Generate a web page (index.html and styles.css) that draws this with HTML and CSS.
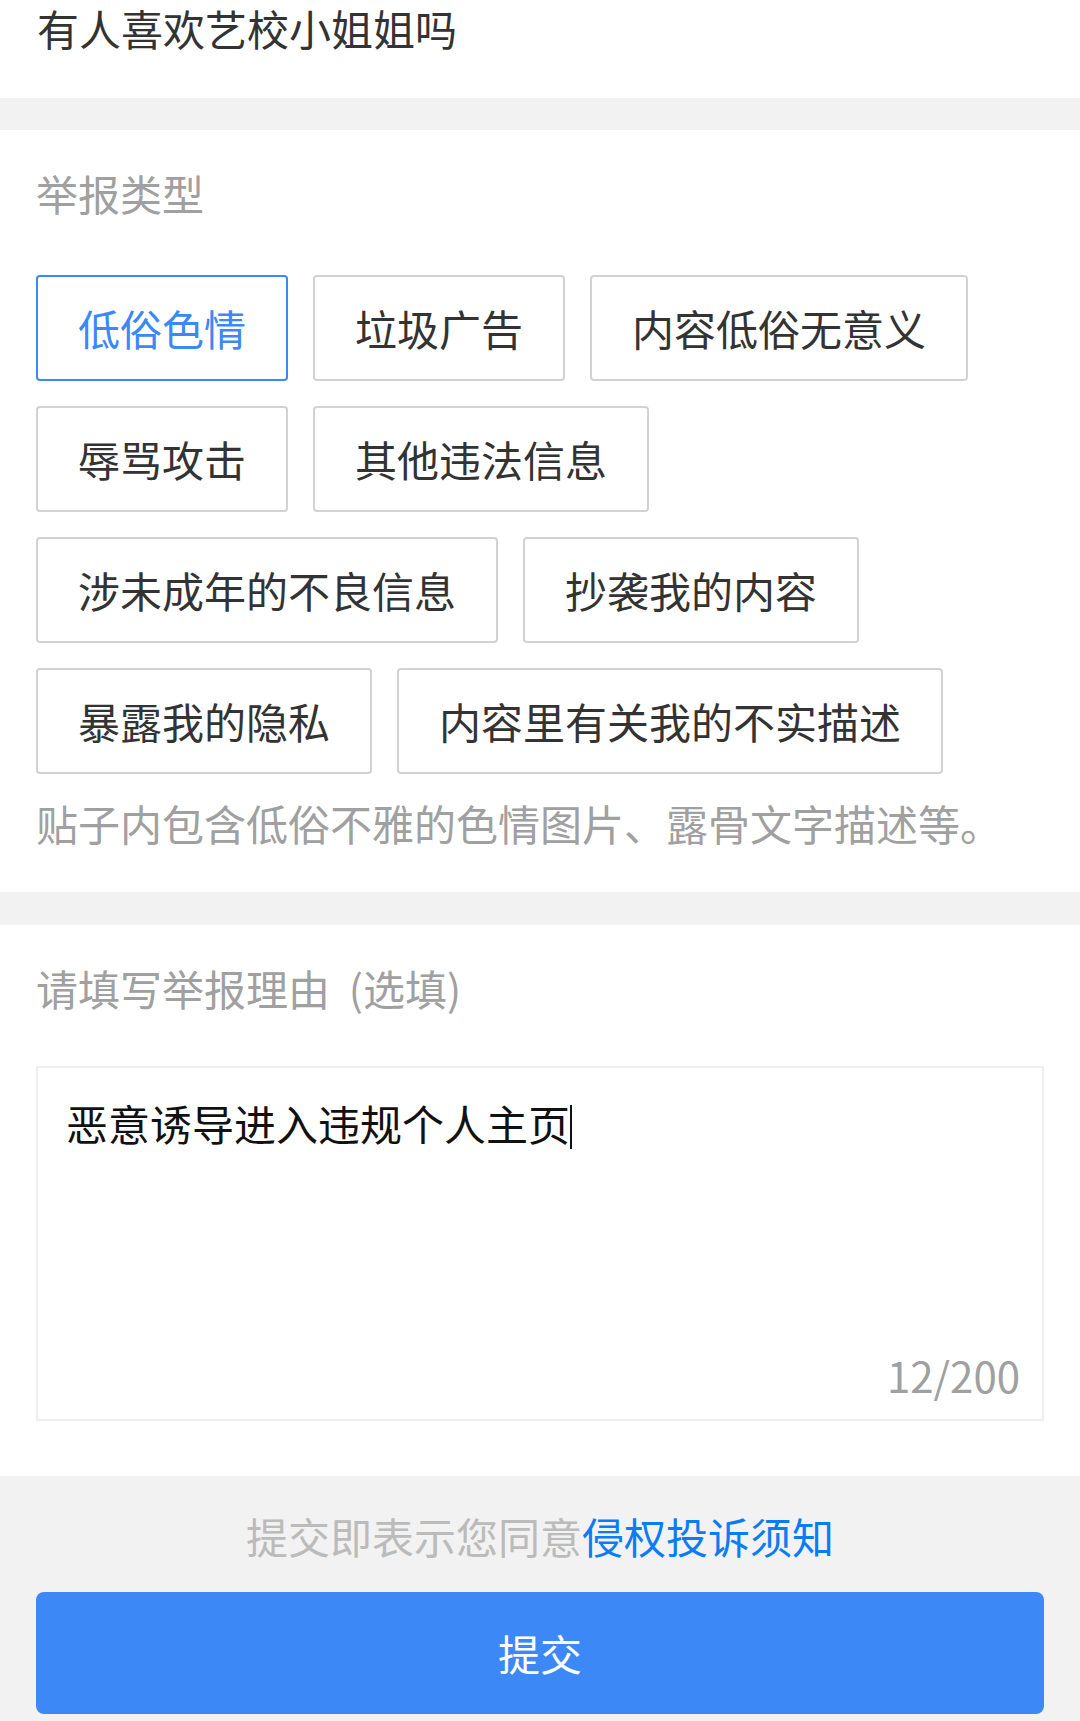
FILE: index.html
```html
<!DOCTYPE html>
<html lang="zh-CN">
<head>
  <meta charset="UTF-8">
  <meta name="viewport" content="width=device-width, initial-scale=1.0">
  <title>举报</title>
  <link rel="stylesheet" href="styles.css">
</head>
<body>
  <section class="block post-title">有人喜欢艺校小姐姐吗</section>

  <section class="block report-type">
    <div class="label">举报类型</div>
    <div class="chips">
      <button class="chip active">低俗色情</button>
      <button class="chip">垃圾广告</button>
      <button class="chip">内容低俗无意义</button>
      <button class="chip">辱骂攻击</button>
      <button class="chip">其他违法信息</button>
      <button class="chip">涉未成年的不良信息</button>
      <button class="chip">抄袭我的内容</button>
      <button class="chip">暴露我的隐私</button>
      <button class="chip">内容里有关我的不实描述</button>
    </div>
    <p class="hint">贴子内包含低俗不雅的色情图片、露骨文字描述等。</p>
  </section>

  <section class="block reason">
    <div class="label">请填写举报理由&nbsp; (选填)</div>
    <div class="textbox">
      <div class="textbox-text">恶意诱导进入违规个人主页<span class="caret"></span></div>
      <div class="counter">12/200</div>
    </div>
  </section>

  <footer class="footer">
    <p class="agree">提交即表示您同意<a href="#">侵权投诉须知</a></p>
    <button class="submit">提交</button>
  </footer>
</body>
</html>
```

FILE: styles.css
```css
:root {
  --bg-gray: #f2f2f2;
  --text-main: #333333;
  --text-muted: #a0a0a0;
  --border: #d2d2d2;
  --blue: #3b88f6;
  --link: #0c7cf2;
}

body {
  margin: 0;
  background-color: var(--bg-gray);
  font-family: "Noto Sans CJK SC", "Noto Sans", sans-serif;
  font-size: 42px;
  line-height: 58px;
  color: var(--text-main);
}

.block {
  background: white;
  padding: 0 36px;
}

.post-title {
  height: 98px;
  padding-left: 37px;
  line-height: 56px;
  margin-bottom: 32px;
}

.label {
  color: var(--text-muted);
}

.report-type {
  padding-top: 34px;
  padding-bottom: 40px;
  margin-bottom: 33px;
}

.chips {
  margin-top: 53px;
  display: flex;
  flex-wrap: wrap;
  gap: 25px 25px;
}

.chip {
  height: 106px;
  padding: 0 40px;
  border: 2px solid var(--border);
  border-radius: 4px;
  background: white;
  font: inherit;
  color: var(--text-main);
}

.chip.active {
  border-color: var(--blue);
  color: var(--blue);
}

.hint {
  margin: 20px 0 0;
  color: var(--text-muted);
}

.reason {
  padding-top: 34px;
  padding-bottom: 55px;
}

.textbox {
  margin-top: 49px;
  height: 355px;
  box-sizing: border-box;
  border: 2px solid #eeeeee;
  padding: 26px 22px 15px 28px;
  display: flex;
  flex-direction: column;
  justify-content: space-between;
}

.textbox-text {
  color: #111111;
}

.caret {
  display: inline-block;
  width: 2px;
  height: 44px;
  background: #111111;
  vertical-align: -8px;
}

.counter {
  text-align: right;
  color: var(--text-muted);
}

.footer {
  padding: 31px 36px 6px;
}

.agree {
  margin: 0 0 27px;
  text-align: center;
  color: #bbbbbb;
}

.agree a {
  color: var(--link);
  text-decoration: none;
}

.submit {
  display: block;
  width: 100%;
  height: 122px;
  border: none;
  border-radius: 8px;
  background-color: var(--blue);
  color: white;
  font: inherit;
}
```
